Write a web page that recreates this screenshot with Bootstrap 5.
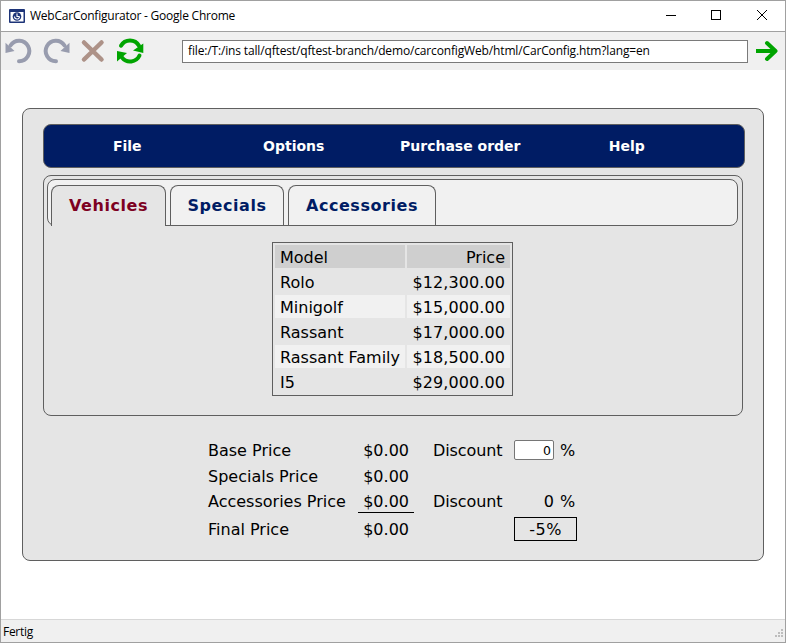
<!DOCTYPE html>
<html lang="en">
<head>
<meta charset="utf-8">
<title>WebCarConfigurator</title>
<link href="https://cdn.jsdelivr.net/npm/bootstrap@5.3.0/dist/css/bootstrap.min.css" rel="stylesheet">
<style>
body{font-family:"DejaVu Sans",sans-serif;font-size:16px;line-height:20px;color:#000;overflow:hidden}
.window{width:786px;height:643px;border:1px solid #a0a0a0}
.ui{font-family:"Open Sans",sans-serif;font-size:12px;line-height:16px;white-space:nowrap}
.titlebar{height:31px;border-bottom:1px solid #a0a0a0;padding-left:8px}
.titlebar .caption{letter-spacing:-.23px;margin-left:5px}
.toolbar{height:38px;background:#f0f0f0;padding-left:2px}
.address{width:566px;height:23px;border:1px solid #7a7a7a;padding-left:5px;margin-left:35px}
.url{letter-spacing:-.15px}
.statusbar{height:23px;background:#f0f0f0;border-top:1px solid #d7d7d7;padding:0 1px 0 2px}
.statusbar .message{padding-top:2px;letter-spacing:-.3px}
.panel{width:742px;height:453px;margin:38px 0 0 21px;padding:15px 18px 0 20px;background:#e5e5e5;border:1px solid #5f5f5f;border-radius:8px}
.menu{height:44px;background:#001c64;border:1px solid #5f5f5f;border-radius:8px;color:#fff;font-weight:bold;font-size:14px}
.menu a{color:#fff;text-decoration:none;width:166.5px;text-align:center}
.pane{width:700px;height:241px;margin-top:7px;padding:3px;border:1px solid #5f5f5f;border-radius:8px}
.strip{width:691px;height:47px;background:#f1f1f1;border:1px solid #5f5f5f;border-radius:8px;padding:5px 0 0 3px;gap:4px}
.tab{height:40px;border:1px solid #5f5f5f;border-bottom:0;border-radius:8px 8px 0 0;color:#001c64;font-weight:bold;font-size:16px;letter-spacing:.55px;text-decoration:none}
.tab.on{height:41px;background:#e5e5e5;color:#7d0021}
.t1{width:115px}.t2{width:114px}.t3{width:148px}
.cars{width:241px;margin:16px 0 0 225px;border:1px solid #5f5f5f;border-collapse:separate;border-spacing:2px;line-height:19px}
.cars td,.cars th{height:23px;padding:3px 5px 1px;font-weight:normal;white-space:nowrap}
.cars th{background:#cfcfcf}
.cars .alt td{background:#f1f1f1}
.cars .model{width:130px}
.cars td.text-end{letter-spacing:.1px}
.totals{display:grid;grid-template-columns:150px 56px 19px 81px 40px 23px;grid-template-rows:26px 26px 24px 4px 24px;margin:21px 0 0 165px;align-items:center;white-space:nowrap}
.totals span{padding-top:2px}
.totals .sum{padding-right:5px;text-align:right}
.totals .line{border-bottom:1px solid #000;height:24px;padding-top:3px}
.totals .c4{grid-column:4;letter-spacing:-.1px}
.totals .pct{padding-left:6px}
.totals .final{grid-row:5}
.num{width:40px;height:20px;border:1px solid #767676;border-radius:2px;background:#fff;padding:1px 2px 0;text-align:right;font-size:12.5px}
.apply{grid-column:5/7;grid-row:5;width:63px;height:24px;border:1px solid #000;background:transparent;padding:1px 0 0;line-height:21px;letter-spacing:.5px}
</style>
<script src="https://cdn.jsdelivr.net/npm/bootstrap@5.3.0/dist/js/bootstrap.bundle.min.js"></script>
</head>
<body>
<div class="window d-flex flex-column bg-white">
  <header class="titlebar ui d-flex align-items-center flex-shrink-0">
    <svg width="16" height="14" viewBox="0 0 16 14"><rect width="16" height="14" rx="1" fill="#1d3478"/><path d="M1.500 3h13v9.500h-13z" fill="#fff"/><circle cx="8" cy="7.500" r="4.300" fill="#1d3478"/><path d="M8 4.500v3h2.500M5.500 7.500a2.500 2.500 0 0 0 5 0" fill="none" stroke="#fff" stroke-width="1.1"/></svg>
    <span class="caption">WebCarConfigurator - Google Chrome</span>
    <svg class="ms-auto" width="120" height="31" viewBox="0 0 120 31" fill="none" stroke="#000" shape-rendering="crispEdges"><path d="M1 14.500h10M46.500 9.500h9v9h-9z"/><path d="M92 9l10 10M102 9l-10 10" shape-rendering="auto"/></svg>
  </header>
  <div class="toolbar ui d-flex align-items-center flex-shrink-0">
    <svg width="144" height="38" viewBox="0 0 144 38" fill="none" stroke-linecap="round">
      <g stroke="#989cae" stroke-width="4"><path d="M7.500 13.500A10.200 10.200 0 1 1 16 29.200"/><path d="M61.500 13.500A10.200 10.200 0 1 0 53 29.200"/></g>
      <path d="M2.500 10.700v10.300l9-2zM66.500 10.700v10.300l-9-2z" fill="#989cae"/>
      <path d="M81 10.500l17.500 17M98.500 10.500l-17.500 17" stroke="#ad9288" stroke-width="4.500"/>
      <g stroke="#00a400" stroke-width="4"><path d="M118 13.700a10.300 10.300 0 0 1 18 0M136.500 23.500a10.300 10.300 0 0 1-17.500 2"/></g>
      <path d="M140.300 11.500v9.500l-10.300-2.500zM114 29.500v-10.500l10 2z" fill="#00a400"/>
    </svg>
    <div class="address bg-white d-flex align-items-center"><span class="url">file:/T:/ins tall/qftest/qftest-branch/demo/carconfigWeb/html/CarConfig.htm?lang=en</span></div>
    <svg class="ms-2" width="24" height="24" viewBox="0 0 24 24" fill="none" stroke="#00a400" stroke-width="4" stroke-linecap="round" stroke-linejoin="round"><path d="M0 12h19M11 4l8.500 8-8.500 8"/></svg>
  </div>
  <main class="flex-grow-1">
    <div class="panel">
      <nav class="menu d-flex align-items-center"><a href="#">File</a><a href="#">Options</a><a href="#">Purchase order</a><a href="#">Help</a></nav>
      <div class="pane">
        <div class="strip d-flex align-items-start">
          <a href="#" class="tab on t1 d-flex align-items-center justify-content-center">Vehicles</a>
          <a href="#" class="tab t2 d-flex align-items-center justify-content-center">Specials</a>
          <a href="#" class="tab t3 d-flex align-items-center justify-content-center">Accessories</a>
        </div>
        <table class="cars">
          <tr><th class="model">Model</th><th class="text-end">Price</th></tr>
          <tr><td>Rolo</td><td class="text-end">$12,300.00</td></tr>
          <tr class="alt"><td>Minigolf</td><td class="text-end">$15,000.00</td></tr>
          <tr><td>Rassant</td><td class="text-end">$17,000.00</td></tr>
          <tr class="alt"><td>Rassant Family</td><td class="text-end">$18,500.00</td></tr>
          <tr><td>I5</td><td class="text-end">$29,000.00</td></tr>
        </table>
      </div>
      <div class="totals">
        <span>Base Price</span><span class="sum">$0.00</span><span class="c4">Discount</span><input class="num" value="0"><span class="pct">%</span>
        <span>Specials Price</span><span class="sum">$0.00</span><span></span><span></span><span></span><span></span>
        <span>Accessories Price</span><span class="sum line">$0.00</span><span class="c4">Discount</span><span class="text-end">0</span><span class="pct">%</span>
        <span class="final">Final Price</span><span class="final sum">$0.00</span><button class="apply">-5%</button>
      </div>
    </div>
  </main>
  <footer class="statusbar ui d-flex align-items-center flex-shrink-0">
    <span class="message">Fertig</span>
    <svg class="ms-auto align-self-end mb-1" width="9" height="9" viewBox="0 0 9 9" fill="#bdbdbd"><path d="M6 0h2v2H6zM3 3h2v2H3zM6 3h2v2H6zM0 6h2v2H0zM3 6h2v2H3zM6 6h2v2H6z"/></svg>
  </footer>
</div>
</body>
</html>
